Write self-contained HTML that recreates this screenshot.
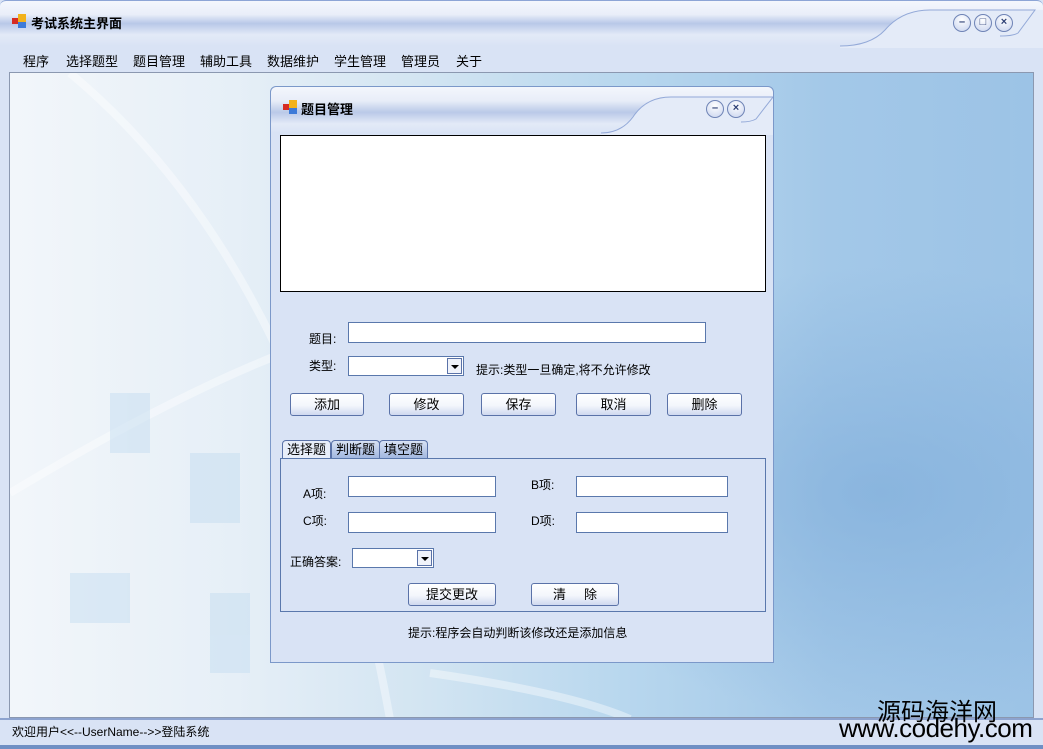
<!DOCTYPE html>
<html><head><meta charset="utf-8"><style>
*{box-sizing:border-box;margin:0;padding:0}
body{width:1043px;height:749px;overflow:hidden;background:#d9e3f5;font-family:"Liberation Sans","Noto Sans CJK SC","WenQuanYi Zen Hei",sans-serif;font-size:12px;color:#000;position:relative}
.a{position:absolute}
.title{left:0;top:0;width:1043px;height:46px;background:linear-gradient(#f4f7fd 0%,#e9eef9 30%,#b8c8e8 50%,#e3eaf7 75%,#d9e3f5 100%);border-radius:6px 6px 0 0;border-top:1px solid #8da5d6}
.icon{width:14px;height:14px}
.icon i{position:absolute}
.menu span{position:absolute;top:51px;font-size:13px}
.mdi{left:9px;top:72px;width:1025px;height:646px;border:1px solid #8b98b0;background:linear-gradient(90deg,#f2f6fa 0%,#e6eff7 22%,#d3e5f2 40%,#b8d7ee 60%,#a3c8e8 80%,#9cc3e6 100%);overflow:hidden}
.btnc{width:18px;height:18px;border-radius:50%;border:1px solid #6f84b6;background:radial-gradient(circle at 50% 30%,#fff,#c8d3ee);color:#2c3f75;font-size:11px;font-weight:bold;text-align:center;line-height:15px}
.dlg{left:270px;top:86px;width:504px;height:577px;border:1px solid #7b98c9;background:#d9e3f5;border-radius:6px 6px 0 0}
.inp{background:#fff;border:1px solid #5a78ac}
.btn{height:23px;border:1px solid #5a72a8;border-radius:3px;background:linear-gradient(#fff 0%,#f3f6fc 55%,#cfd8ef 100%);text-align:center;line-height:21px;font-size:13px}
.cmb .dd{position:absolute;right:1px;top:1px;width:15px;height:16px;border:1px solid #5a72a8;background:#f0f3fa}
.cmb .dd:after{content:"";position:absolute;left:3px;top:6px;border-left:4px solid transparent;border-right:4px solid transparent;border-top:4px solid #000}
.lbl{font-size:12px}
.tab{top:440px;height:19px;border:1px solid #5a72a8;border-bottom:none;border-radius:4px 4px 0 0;font-size:13px;line-height:17px;padding:0 4px;background:linear-gradient(#d8e2f4,#9fb5df)}
</style></head><body>
<div class="a title"></div>
<svg class="a" style="left:840px;top:0" width="203" height="48"><path d="M0 46 Q30 46 45 30 Q62 10 90 10 L203 10 L203 48 L0 48 Z" fill="#e4ebf8"/><path d="M0 46 Q30 46 45 30 Q62 10 90 10 L195 10 L178 33 Q173 36 160 36" fill="none" stroke="#93a9d8"/></svg>
<div class="a icon" style="left:12px;top:14px"><i style="left:0;top:4px;width:7px;height:6px;background:#d62b22"></i><i style="left:6px;top:0;width:8px;height:8px;background:#f2b21b"></i><i style="left:6px;top:8px;width:8px;height:6px;background:#3d7ad8"></i></div>
<div class="a" style="left:31px;top:13px;font-size:13px;font-weight:bold">考试系统主界面</div>
<div class="a btnc" style="left:953px;top:14px">–</div>
<div class="a btnc" style="left:974px;top:14px">□</div>
<div class="a btnc" style="left:995px;top:14px">×</div>
<div class="menu"><span style="left:23px">程序</span><span style="left:66px">选择题型</span><span style="left:133px">题目管理</span><span style="left:200px">辅助工具</span><span style="left:267px">数据维护</span><span style="left:334px">学生管理</span><span style="left:401px">管理员</span><span style="left:456px">关于</span></div>
<div class="a mdi">
<svg class="a" style="left:0;top:0" width="1025" height="646"><defs><radialGradient id="g" cx="0.85" cy="0.65" r="0.35"><stop offset="0" stop-color="#7aa9d8" stop-opacity=".6"/><stop offset="1" stop-color="#7aa9d8" stop-opacity="0"/></radialGradient></defs><rect width="1025" height="646" fill="url(#g)"/><g fill="none" stroke="#ffffff" stroke-opacity=".4" stroke-width="8"><path d="M60 0 Q300 200 380 646"/><path d="M0 420 Q200 300 330 260"/><path d="M420 600 Q560 620 620 646"/></g><g fill="#c6def1" opacity=".5"><rect x="100" y="320" width="40" height="60"/><rect x="180" y="380" width="50" height="70"/><rect x="60" y="500" width="60" height="50"/><rect x="200" y="520" width="40" height="80"/></g></svg>
</div>
<div class="a dlg">
<div class="a" style="left:0;top:0;width:502px;height:46px;border-radius:6px 6px 0 0;background:linear-gradient(#f3f6fc 0%,#e8edf8 30%,#bac9e8 55%,#e3eaf7 80%,#d9e3f5 100%)"></div>
<svg class="a" style="left:330px;top:0" width="172" height="48"><path d="M0 46 Q20 46 32 30 Q45 10 70 10 L172 10 L172 48 L0 48 Z" fill="#e4ebf8"/><path d="M0 46 Q20 46 32 30 Q45 10 70 10 L172 10 L155 32 Q150 35 140 35" fill="none" stroke="#93a9d8"/></svg>
<div class="a icon" style="left:12px;top:13px"><i style="left:0;top:4px;width:7px;height:6px;background:#d62b22"></i><i style="left:6px;top:0;width:8px;height:8px;background:#f2b21b"></i><i style="left:6px;top:8px;width:8px;height:6px;background:#3d7ad8"></i></div>
<div class="a" style="left:30px;top:12px;font-size:13px;font-weight:bold">题目管理</div>
<div class="a btnc" style="left:435px;top:13px">–</div>
<div class="a btnc" style="left:456px;top:13px">×</div>
</div>
<div class="a" style="left:280px;top:135px;width:486px;height:157px;background:#fff;border:1px solid #000"></div>
<div class="a lbl" style="left:309px;top:330px">题目:</div>
<div class="a inp" style="left:348px;top:322px;width:358px;height:21px"></div>
<div class="a lbl" style="left:309px;top:357px">类型:</div>
<div class="a inp cmb" style="left:348px;top:356px;width:116px;height:20px"><div class="dd"></div></div>
<div class="a lbl" style="left:476px;top:361px">提示:类型一旦确定,将不允许修改</div>
<div class="a btn" style="left:290px;top:393px;width:74px">添加</div>
<div class="a btn" style="left:389px;top:393px;width:75px">修改</div>
<div class="a btn" style="left:481px;top:393px;width:75px">保存</div>
<div class="a btn" style="left:576px;top:393px;width:75px">取消</div>
<div class="a btn" style="left:667px;top:393px;width:75px">删除</div>
<div class="a tab" style="left:282px;background:#e8eef9">选择题</div>
<div class="a tab" style="left:331px">判断题</div>
<div class="a tab" style="left:379px">填空题</div>
<div class="a" style="left:280px;top:458px;width:486px;height:154px;border:1px solid #5a78ac"></div>
<div class="a lbl" style="left:303px;top:485px">A项:</div>
<div class="a inp" style="left:348px;top:476px;width:148px;height:21px"></div>
<div class="a lbl" style="left:531px;top:476px">B项:</div>
<div class="a inp" style="left:576px;top:476px;width:152px;height:21px"></div>
<div class="a lbl" style="left:303px;top:512px">C项:</div>
<div class="a inp" style="left:348px;top:512px;width:148px;height:21px"></div>
<div class="a lbl" style="left:531px;top:512px">D项:</div>
<div class="a inp" style="left:576px;top:512px;width:152px;height:21px"></div>
<div class="a lbl" style="left:290px;top:553px">正确答案:</div>
<div class="a inp cmb" style="left:352px;top:548px;width:82px;height:20px"><div class="dd"></div></div>
<div class="a btn" style="left:408px;top:583px;width:88px">提交更改</div>
<div class="a btn" style="left:531px;top:583px;width:88px">清&nbsp;&nbsp;&nbsp;&nbsp;&nbsp;除</div>
<div class="a lbl" style="left:408px;top:624px">提示:程序会自动判断该修改还是添加信息</div>
<div class="a" style="left:0;top:718px;width:1043px;height:2px;background:#8da3cf"></div>
<div class="a lbl" style="left:12px;top:723px">欢迎用户&lt;&lt;--UserName--&gt;&gt;登陆系统</div>
<div class="a" style="left:877px;top:692px;font-size:24px">源码海洋网</div>
<div class="a" style="left:839px;top:713px;font-size:26px;letter-spacing:-0.5px">www.codehy.com</div>
<div class="a" style="left:0;top:745px;width:1043px;height:4px;background:#6f8fc4"></div>
</body></html>
